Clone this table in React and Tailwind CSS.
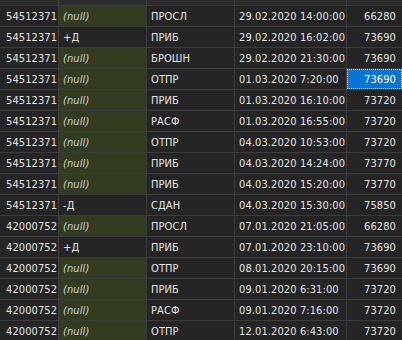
import React from "react";

const rows = [
  ["54512371", null, "ПРОСЛ", "29.02.2020 14:00:00", "66280"],
  ["54512371", "+Д", "ПРИБ", "29.02.2020 16:02:00", "73690"],
  ["54512371", null, "БРОШН", "29.02.2020 21:30:00", "73690"],
  ["54512371", null, "ОТПР", "01.03.2020 7:20:00", "73690", true],
  ["54512371", null, "ПРИБ", "01.03.2020 16:10:00", "73720"],
  ["54512371", null, "РАСФ", "01.03.2020 16:55:00", "73720"],
  ["54512371", null, "ОТПР", "04.03.2020 10:53:00", "73720"],
  ["54512371", null, "ПРИБ", "04.03.2020 14:24:00", "73770"],
  ["54512371", null, "ПРИБ", "04.03.2020 15:20:00", "73770"],
  ["54512371", "-Д", "СДАН", "04.03.2020 15:30:00", "75850"],
  ["42000752", null, "ПРОСЛ", "07.01.2020 21:05:00", "66280"],
  ["42000752", "+Д", "ПРИБ", "07.01.2020 23:10:00", "73690"],
  ["42000752", null, "ОТПР", "08.01.2020 20:15:00", "73690"],
  ["42000752", null, "ПРИБ", "09.01.2020 6:31:00", "73720"],
  ["42000752", null, "РАСФ", "09.01.2020 7:16:00", "73720"],
  ["42000752", null, "ОТПР", "12.01.2020 6:43:00", "73720"],
];

const cell = "h-[21px] border-b border-r border-[#3c3c3c] flex items-center whitespace-nowrap overflow-hidden";

export default function App() {
  return (
    <div
      className="w-[402px] h-[340px] overflow-hidden bg-[#252525] text-[#e4e4e4] text-[11px] tracking-[0.1px] leading-none"
      style={{ fontFamily: '"DejaVu Sans Condensed", "DejaVu Sans", Tahoma, sans-serif' }}
    >
      <div className="grid grid-cols-[59px_88px_88px_112px_55px]">
        <div className="h-[6px] border-b border-r border-[#3c3c3c] bg-[#2c2c2c]" />
        <div className="h-[6px] border-b border-r border-[#3c3c3c] bg-[#2c2c2c]" />
        <div className="h-[6px] border-b border-r border-[#3c3c3c] bg-[#2c2c2c]" />
        <div className="h-[6px] border-b border-r border-[#3c3c3c] bg-[#2c2c2c]" />
        <div className="h-[6px] border-b border-[#3c3c3c] bg-[#2c2c2c]" />
        {rows.map((r, i) => (
          <React.Fragment key={i}>
            <div className={`${cell} pl-[6px]`}>{r[0]}</div>
            <div className={`${cell} pl-[4px] ${r[1] === null ? "bg-[#313c21] italic text-[#d0d0d0]" : ""}`}>
              {r[1] === null ? "(null)" : r[1]}
            </div>
            <div className={`${cell} pl-[4px]`}>{r[2]}</div>
            <div className={`${cell} pl-[4px]`}>{r[3]}</div>
            {r[5] ? (
              <div className="h-[21px] border-b border-[#3c3c3c] flex">
                <div className="flex-1 bg-[#0a74d2] border border-dotted border-white flex items-center justify-end pr-[5px] text-white">
                  {r[4]}
                </div>
              </div>
            ) : (
              <div className="h-[21px] border-b border-[#3c3c3c] flex items-center justify-end pr-[6px]">{r[4]}</div>
            )}
          </React.Fragment>
        ))}
      </div>
    </div>
  );
}
